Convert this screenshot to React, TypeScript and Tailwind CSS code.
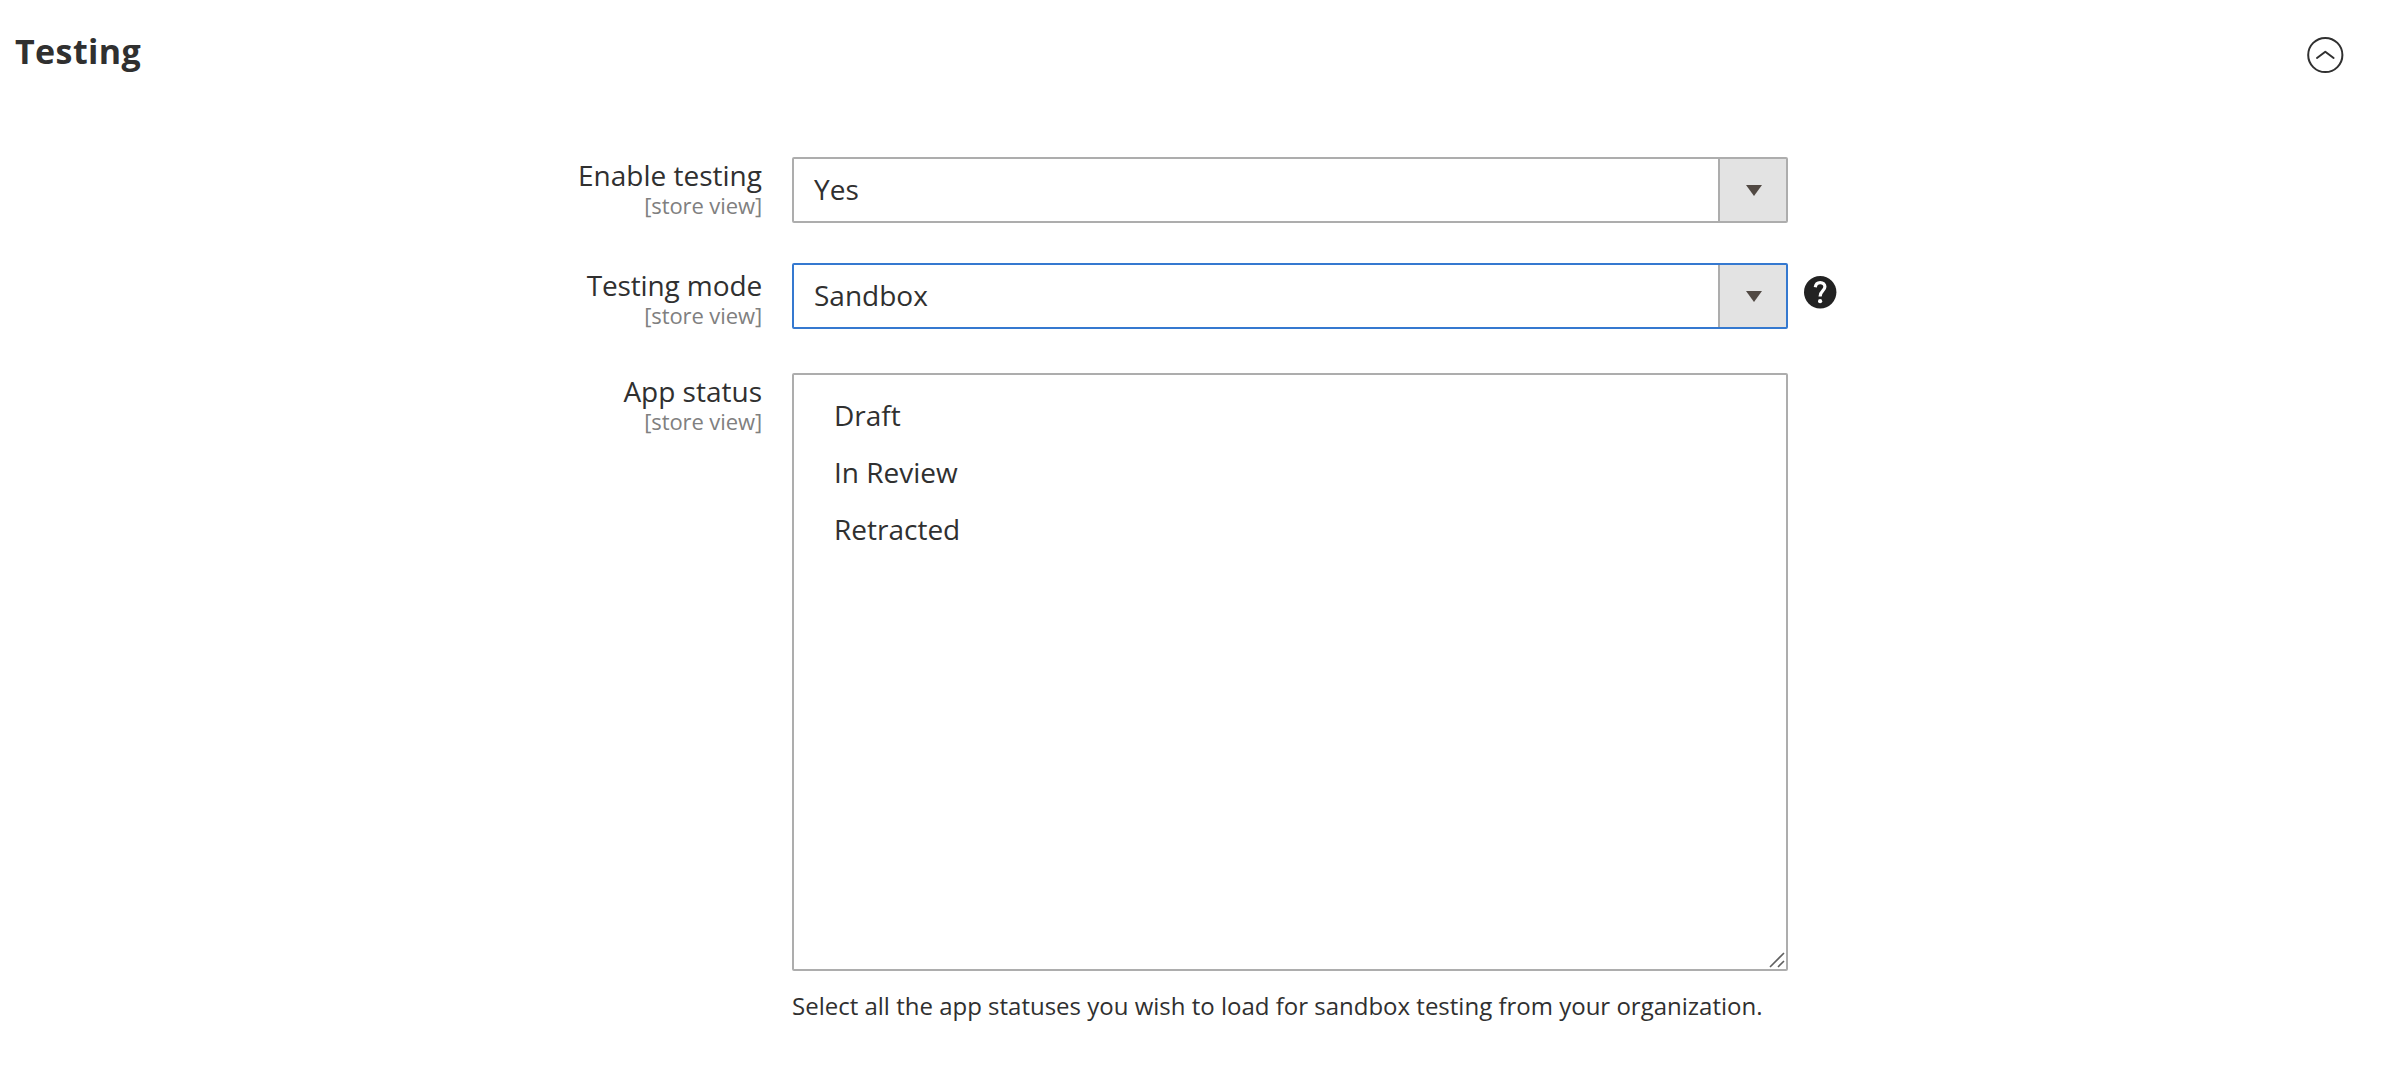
import React from "react";

function Label({ text, top, tight }: { text: string; top: string; tight?: boolean }) {
  return (
    <div className={"w-[762px] shrink-0 text-right " + top}>
      <div className={"text-[28px] leading-[32px] text-[#303030] " + (tight ? "tracking-[-0.12px]" : "")}>{text}</div>
      <div className="text-[22px] leading-[28px] tracking-[-0.1px] text-[#808080]">[store view]</div>
    </div>
  );
}

function Select({ value, focused }: { value: string; focused?: boolean }) {
  return (
    <div className={"ml-[30px] flex h-[66px] w-[996px] rounded-[2px] border-2 " + (focused ? "border-[#3579d0]" : "border-[#adadad]")}>
      <div className="flex-1 pl-5 text-[28px] leading-[61px] text-[#303030]">{value}</div>
      <div className="flex w-[68px] items-center justify-center border-l-2 border-[#adadad] bg-[#e3e3e3] pl-[2px] pt-px">
        <svg width="16" height="11" viewBox="0 0 16 11"><path d="M0 0H16L8 11Z" fill="#514943" /></svg>
      </div>
    </div>
  );
}

export default function App() {
  return (
    <main className="h-[1080px] w-[2392px] overflow-hidden bg-white font-['Open_Sans',sans-serif]">
      <header className="flex h-[157px] items-start justify-between pl-[15px] pr-[48px]">
        <h2 className="mt-[28px] text-[34px] font-bold leading-[46px] tracking-[0.4px] text-[#303030]">Testing</h2>
        <svg className="mt-[36px]" width="38" height="38" viewBox="0 0 38 38" fill="none" stroke="#303030" strokeWidth="2">
          <circle cx="19.3" cy="19" r="17.1" />
          <path d="M11 22L19.3 15.7L27.6 22" strokeLinecap="round" strokeLinejoin="round" />
        </svg>
      </header>
      <div className="flex h-[106px]">
        <Label text="Enable testing" top="pt-[2px]" />
        <Select value="Yes" />
      </div>
      <div className="flex h-[110px]">
        <Label text="Testing mode" top="pt-[6px]" tight />
        <Select value="Sandbox" focused />
        <svg className="ml-[16px] mt-[13px]" width="33" height="33" viewBox="0 0 33 33">
          <circle cx="16.2" cy="16.2" r="16.2" fill="#222" />
          <path d="M11.3 11.2C11.7 8 13.6 6.6 16.2 6.6C19 6.6 20.9 8.3 20.9 10.8C20.9 14.8 16.1 14.6 16.1 20.6" fill="none" stroke="#fff" strokeWidth="3.2" />
          <circle cx="16.1" cy="25.2" r="2.1" fill="#fff" />
        </svg>
      </div>
      <div className="flex">
        <Label text="App status" top="pt-[2px]" />
        <div className="relative ml-[30px] h-[598px] w-[996px] rounded-[2px] border-2 border-[#adadad] pl-[40px] pt-[12px] text-[28px] leading-[57px] text-[#303030]">
          <div>Draft</div>
          <div>In Review</div>
          <div>Retracted</div>
          <svg className="absolute bottom-0 right-0" width="18" height="18" viewBox="0 0 18 18" stroke="#606060" strokeWidth="1.6">
            <path d="M2 16L16 2M10 16L16 10" />
          </svg>
        </div>
      </div>
      <p className="ml-[792px] mt-[18px] text-[24px] leading-[34px] text-[#303030]">Select all the app statuses you wish to load for sandbox testing from your organization.</p>
    </main>
  );
}
